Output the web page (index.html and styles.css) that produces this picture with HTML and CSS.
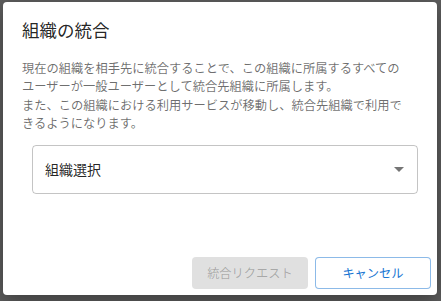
FILE: index.html
```html
<!DOCTYPE html>
<html lang="ja">
<head>
<meta charset="utf-8">
<link rel="stylesheet" href="styles.css">
</head>
<body>
<div class="backdrop">
  <div class="dialog" role="dialog">
    <h2 class="dialog-title">組織の統合</h2>
    <div class="dialog-content">
      <p class="dialog-text">現在の組織を相手先に統合することで、この組織に所属するすべてのユーザーが一般ユーザーとして統合先組織に所属します。<br>また、この組織における利用サービスが移動し、統合先組織で利用できるようになります。</p>
      <div class="select">
        <span class="select-label">組織選択</span>
        <svg class="select-arrow" width="10" height="5" viewBox="0 0 10 5"><path d="M0 0 L10 0 L5 5 Z" fill="#757575"/></svg>
      </div>
    </div>
    <div class="dialog-actions">
      <button class="btn btn-disabled" disabled>統合リクエスト</button>
      <button class="btn btn-outlined">キャンセル</button>
    </div>
  </div>
</div>
</body>
</html>
```

FILE: styles.css
```css
html, body {
  margin: 0;
  padding: 0;
}
body {
  width: 441px;
  height: 301px;
  overflow: hidden;
  background: #5d5d5d;
  font-family: "Noto Sans CJK JP", "Noto Sans", sans-serif;
}
.backdrop {
  padding: 2px 0 0 3px;
}
.dialog {
  width: 434px;
  height: 293px;
  background: #fff;
  border-radius: 4px;
  box-shadow: 0 6px 20px rgba(0,0,0,0.35);
  display: flex;
  flex-direction: column;
  box-sizing: border-box;
}
.dialog-title {
  margin: 0;
  padding: 14px 20px 0 19px;
  font-size: 17.5px;
  font-weight: 400;
  line-height: 28px;
  color: rgba(0,0,0,0.87);
}
.dialog-content {
  padding: 15px 30px 0 19px;
  flex: 1;
}
.dialog-text {
  margin: 0 0 12px 0;
  font-size: 12.25px;
  line-height: 18.4px;
  color: rgba(0,0,0,0.58);
  letter-spacing: 0;
}
.select {
  margin-left: 10px;
  width: 386px;
  height: 49px;
  box-sizing: border-box;
  border: 1px solid rgba(0,0,0,0.23);
  border-radius: 4px;
  display: flex;
  align-items: center;
  justify-content: space-between;
  padding: 0 13px 0 12px;
}
.select-label {
  font-size: 14px;
  color: rgba(0,0,0,0.87);
  line-height: 20px;
}
.select-arrow {
  display: block;
}
.dialog-actions {
  display: flex;
  justify-content: flex-end;
  gap: 7px;
  padding: 0 6px 6px 0;
}
.btn {
  width: 116px;
  height: 32px;
  box-sizing: border-box;
  border-radius: 4px;
  font-family: "Noto Sans CJK JP", "Noto Sans", sans-serif;
  font-size: 12.25px;
  padding: 0;
  line-height: 1;
  background: none;
}
.btn-disabled {
  background: #e0e0e0;
  border: none;
  color: rgba(0,0,0,0.26);
}
.btn-outlined {
  border: 1px solid rgba(25,118,210,0.5);
  color: #1976d2;
  background: #fff;
}
```
